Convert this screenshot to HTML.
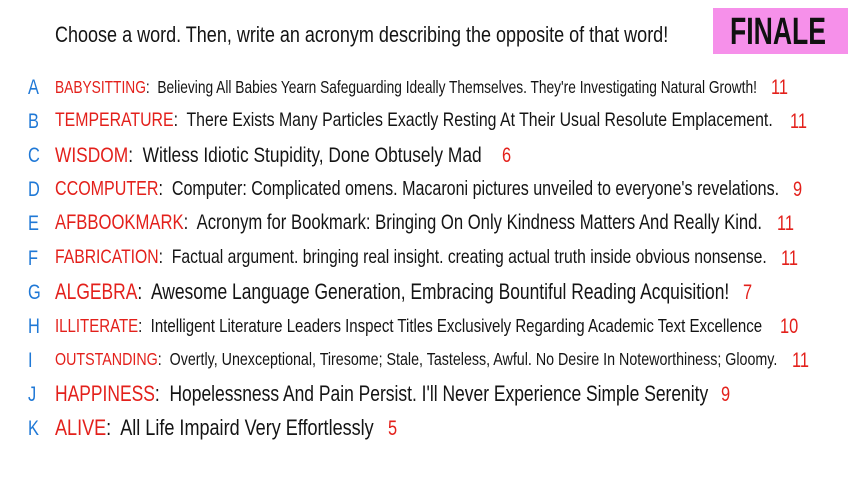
<!DOCTYPE html>
<html><head><meta charset="utf-8"><style>
html,body{margin:0;padding:0;background:#fff;}
body{width:853px;height:480px;position:relative;overflow:hidden;font-family:"Liberation Sans",sans-serif;}
.r{position:absolute;white-space:nowrap;line-height:1;transform-origin:0 50%;color:#141414;}
.k{color:#e3201b}
.n{position:absolute;color:#e3201b;line-height:1;white-space:nowrap;transform-origin:0 50%;}
.l{position:absolute;left:28px;color:#1f78d6;line-height:1;transform-origin:0 50%;}
#fin{position:absolute;left:713px;top:8px;width:135px;height:46px;background:#f690ea;}
#fin span{position:absolute;left:17px;top:5px;font-size:38px;font-weight:bold;color:#111;line-height:1;transform:scaleX(0.7);transform-origin:0 0;}
</style></head><body>
<div id="fin"><span>FINALE</span></div>
<div id="c"></div>
<script>
var rows=[
["", "Choose a word. Then, write an acronym describing the opposite of that word!",35,668,20,"",0],
["BABYSITTING","Believing All Babies Yearn Safeguarding Ideally Themselves. They're Investigating Natural Growth!",87,757,15,"11",771],
["TEMPERATURE","There Exists Many Particles Exactly Resting At Their Usual Resolute Emplacement.",121,773,18,"11",790],
["WISDOM","Witless Idiotic Stupidity, Done Obtusely Mad",155,482,19,"6",502],
["CCOMPUTER","Computer: Complicated omens. Macaroni pictures unveiled to everyone's revelations.",189,779,17,"9",793],
["AFBBOOKMARK","Acronym for Bookmark: Bringing On Only Kindness Matters And Really Kind.",223,762,18,"11",777],
["FABRICATION","Factual argument. bringing real insight. creating actual truth inside obvious nonsense.",258,767,16,"11",781],
["ALGEBRA","Awesome Language Generation, Embracing Bountiful Reading Acquisition!",292,729,19,"7",743],
["ILLITERATE","Intelligent Literature Leaders Inspect Titles Exclusively Regarding Academic Text Excellence",326,762,16,"10",780],
["OUTSTANDING","Overtly, Unexceptional, Tiresome; Stale, Tasteless, Awful. No Desire In Noteworthiness; Gloomy.",360,777,15,"11",792],
["HAPPINESS","Hopelessness And Pain Persist. I'll Never Experience Simple Serenity",394,708,19,"9",721],
["ALIVE","All Life Impaird Very Effortlessly",428,374,19,"5",388]
];
var L="ABCDEFGHIJK",c=document.getElementById('c'),S=0.8;
rows.forEach(function(r,i){
 var d=document.createElement('div');d.className='r';
 d.style.fontSize='20px';d.style.left='55px';
 if(r[0]){var s=document.createElement('span');s.className='k';s.textContent=r[0];d.appendChild(s);d.appendChild(document.createTextNode(':\u00a0 '+r[1]));}
 else d.textContent=r[1];
 c.appendChild(d);
 var w=d.offsetWidth;var fs=20*(r[3]-55)/(w*S);
 d.style.fontSize=fs+'px';
 var w2=d.offsetWidth;
 var h=d.offsetHeight;d.style.top=(r[2]-h/2)+'px';
 d.style.transform='scaleX('+((r[3]-55)/w2)+')';
 if(r[5]){var n=document.createElement('div');n.className='n';n.style.fontSize='21px';n.textContent=r[5];c.appendChild(n);
  n.style.left=r[6]+'px';n.style.top=(r[2]-n.offsetHeight/2)+'px';n.style.transform='scaleX(0.78)';
  var l=document.createElement('div');l.className='l';l.style.fontSize='21px';l.textContent=L[i-1];c.appendChild(l);
  l.style.top=(r[2]-l.offsetHeight/2)+'px';l.style.transform='scaleX(0.78)';}
});
</script>
</body></html>
